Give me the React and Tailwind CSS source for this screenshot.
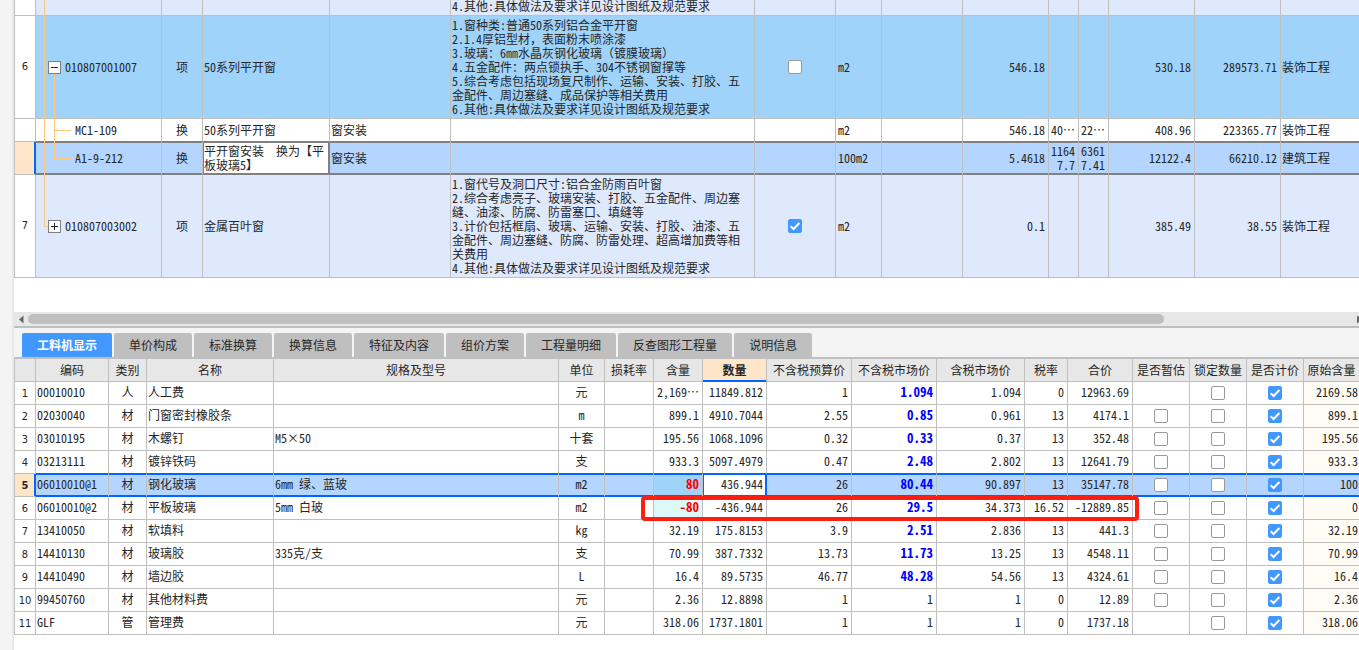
import React from "react";

const LINE = "border-[#bfbfbf]";

function Check({ label, checked = false }) {
  return (
    <label className="mx-auto grid h-[14px] w-[14px] place-items-center">
      <input
        type="checkbox"
        aria-label={label}
        defaultChecked={checked}
        className="peer col-start-1 row-start-1 m-0 h-[14px] w-[14px] appearance-none rounded-[2px] border border-[#999999] bg-white checked:border-[#4199ff] checked:bg-[#4199ff]"
      />
      <svg
        viewBox="0 0 14 14"
        className="pointer-events-none invisible col-start-1 row-start-1 h-[14px] w-[14px] peer-checked:visible"
        fill="none"
        stroke="#fff"
        strokeWidth="2"
        aria-hidden="true"
      >
        <path d="M2.6 7.2 5.6 10 11.4 4" />
      </svg>
    </label>
  );
}

function Expander({ open }) {
  return (
    <button type="button" aria-label={open ? "折叠" : "展开"} className="block h-[13px] w-[13px]">
      <svg viewBox="0 0 13 13" className="block h-[13px] w-[13px]" shapeRendering="crispEdges">
        <rect x="0.5" y="0.5" width="12" height="12" fill="#fff" stroke="#808080" />
        <path d={open ? "M3 6.5H10" : "M3 6.5H10M6.5 3V10"} stroke="#262626" />
      </svg>
    </button>
  );
}

/* ---------- bill of quantities ---------- */

const bill = [
  {
    kind: "clipped",
    rowClass: "h-[16px] bg-[#dee9fe]",
    features: ["4.其他:具体做法及要求详见设计图纸及规范要求"],
  },
  {
    kind: "parent",
    no: "6",
    rowClass: "h-[103px] bg-[#a0d3fa]",
    open: true,
    code: "010807001007",
    type: "项",
    name: "50系列平开窗",
    features: [
      "1.窗种类:普通50系列铝合金平开窗",
      "2.1.4厚铝型材，表面粉末喷涂漆",
      "3.玻璃：6㎜水晶灰钢化玻璃（镀膜玻璃）",
      "4.五金配件：两点锁执手、304不锈钢窗撑等",
      "5.综合考虑包括现场复尺制作、运输、安装、打胶、五金配件、周边塞缝、成品保护等相关费用",
      "6.其他:具体做法及要求详见设计图纸及规范要求",
    ],
    check: false,
    unit: "m2",
    qty: "546.18",
    price: "530.18",
    total: "289573.71",
    major: "装饰工程",
  },
  {
    kind: "child",
    rowClass: "h-[23px] bg-white",
    code: "MC1-109",
    type: "换",
    name: "50系列平开窗",
    spec: "窗安装",
    unit: "m2",
    qty: "546.18",
    a: "40…",
    b: "22…",
    price: "408.96",
    total: "223365.77",
    major: "装饰工程",
  },
  {
    kind: "child",
    last: true,
    selected: true,
    rowClass: "h-[33px] bg-[#b3d5ff]",
    code: "A1-9-212",
    type: "换",
    name: "平开窗安装　换为【平板玻璃5】",
    spec: "窗安装",
    unit: "100m2",
    qty: "5.4618",
    a: "11647.7",
    b: "63617.41",
    price: "12122.4",
    total: "66210.12",
    major: "建筑工程",
  },
  {
    kind: "parent",
    no: "7",
    last: true,
    rowClass: "h-[103px] bg-[#dee9fe]",
    code: "010807003002",
    type: "项",
    name: "金属百叶窗",
    features: [
      "1.窗代号及洞口尺寸:铝合金防雨百叶窗",
      "2.综合考虑亮子、玻璃安装、打胶、五金配件、周边塞缝、油漆、防腐、防雷塞口、填缝等",
      "3.计价包括框扇、玻璃、运输、安装、打胶、油漆、五金配件、周边塞缝、防腐、防雷处理、超高增加费等相关费用",
      "4.其他:具体做法及要求详见设计图纸及规范要求",
    ],
    check: true,
    unit: "m2",
    qty: "0.1",
    price: "385.49",
    total: "38.55",
    major: "装饰工程",
  },
];

function Tree({ row }) {
  const line = "absolute bg-[#ffc67d]";
  const trunkEnds = row.kind === "parent" && row.last;
  return (
    <>
      <span className={`${line} left-2 top-0 w-px ${trunkEnds ? "bottom-1/2" : "-bottom-px"}`} />
      {row.kind === "parent" && <span className={`${line} left-2 top-1/2 h-px w-1`} />}
      {row.open && <span className={`${line} left-[18px] top-1/2 -bottom-px w-px`} />}
      {row.kind === "child" && (
        <>
          <span className={`${line} left-[18px] top-0 w-px ${row.last ? "bottom-1/2" : "-bottom-px"}`} />
          <span className={`${line} left-[18px] top-1/2 h-px w-[17px]`} />
        </>
      )}
    </>
  );
}

function BillRow({ row, beforeSelected }) {
  const sel = row.selected;
  const edge = sel
    ? "border-r border-b border-r-[#bfbfbf] border-b-[#808080] shadow-[inset_0_1px_0_#808080,inset_0_-1px_0_#808080]"
    : beforeSelected
      ? "border-r border-b border-r-[#bfbfbf] border-b-[#808080]"
      : `border-r border-b ${LINE}`;
  const nameEdge = sel
    ? "border-r border-b border-[#808080] bg-white shadow-[inset_0_0_0_1px_#808080]"
    : edge;
  const num = `${edge} pl-[2px] pr-[3px] text-right break-all`;
  return (
    <tr className={row.rowClass}>
      <th
        scope="row"
        className={`border-x border-b ${LINE} text-center font-['DejaVu_Sans_Condensed','DejaVu_Sans',sans-serif] text-[11px] font-normal ${
          sel ? "bg-[#ffe6c8] shadow-[inset_-1px_0_0_#0066ff] border-r-[#0066ff]" : "bg-white"
        }`}
      >
        {row.no}
      </th>
      <td className={`relative ${edge}`}>
        <Tree row={row} />
        {row.kind === "parent" && (
          <div className="relative flex items-center gap-1 pl-3">
            <Expander open={row.open} />
            <span>{row.code}</span>
          </div>
        )}
        {row.kind === "child" && <div className="pl-[39px]">{row.code}</div>}
      </td>
      <td className={`${edge} text-center`}>{row.type}</td>
      <td className={`${nameEdge} pl-px`}>{row.name}</td>
      <td className={`${edge} pl-px`}>{row.spec}</td>
      <td className={`${edge} pl-px pr-3 ${row.kind === "clipped" ? "pb-[2px] align-bottom" : ""}`}>
        {row.features && row.features.map((f) => <p key={f}>{f}</p>)}
      </td>
      <td className={edge}>
        {row.check !== undefined && <Check label={`${row.name} 选择`} checked={row.check} />}
      </td>
      <td className={`${edge} pl-[2px]`}>{row.unit}</td>
      <td className={edge} />
      <td className={num}>{row.qty}</td>
      <td className={num}>{row.a}</td>
      <td className={num}>{row.b}</td>
      <td className={num}>{row.price}</td>
      <td className={num}>{row.total}</td>
      <td className={`${edge} border-r-0 pl-px`}>{row.major}</td>
    </tr>
  );
}

function BillTable() {
  return (
    <table className="w-full table-fixed border-separate border-spacing-0">
      <colgroup>
        <col className="w-[22px]" />
        <col className="w-[126px]" />
        <col className="w-[41px]" />
        <col className="w-[127px]" />
        <col className="w-[121px]" />
        <col className="w-[304px]" />
        <col className="w-[81px]" />
        <col className="w-[46px]" />
        <col className="w-[81px]" />
        <col className="w-[86px]" />
        <col className="w-[30px]" />
        <col className="w-[30px]" />
        <col className="w-[86px]" />
        <col className="w-[86px]" />
        <col />
      </colgroup>
      <tbody>
        {bill.map((row, i) => (
          <BillRow key={i} row={row} beforeSelected={Boolean(bill[i + 1] && bill[i + 1].selected)} />
        ))}
      </tbody>
    </table>
  );
}

/* ---------- tabs ---------- */

const tabs = ["工料机显示", "单价构成", "标准换算", "换算信息", "特征及内容", "组价方案", "工程量明细", "反查图形工程量", "说明信息"];

function Tabs() {
  return (
    <div
      role="tablist"
      className="flex gap-[2px] bg-[#f4f4f4] pl-2 pt-[5px] font-['Noto_Sans_CJK_SC',sans-serif]"
    >
      {tabs.map((t, i) => (
        <button
          key={t}
          type="button"
          role="tab"
          aria-selected={i === 0}
          className={`h-6 shrink-0 rounded-t-[2px] px-[15px] ${
            i === 0 ? "bg-[#4199ff] font-bold text-white" : "bg-[#bfbfbf]"
          }`}
        >
          {t}
        </button>
      ))}
    </div>
  );
}

/* ---------- resources ---------- */

const heads = ["编码", "类别", "名称", "规格及型号", "单位", "损耗率", "含量", "数量", "不含税预算价", "不含税市场价", "含税市场价", "税率", "合价", "是否暂估", "锁定数量", "是否计价", "原始含量"];

const resources = [
  ["00010010", "人", "人工费", "", "元", "2,169…", "11849.812", "1", "1.094", "1.094", "0", "12963.69", false, "2169.58"],
  ["02030040", "材", "门窗密封橡胶条", "", "m", "899.1", "4910.7044", "2.55", "0.85", "0.961", "13", "4174.1", true, "899.1"],
  ["03010195", "材", "木螺钉", "M5×50", "十套", "195.56", "1068.1096", "0.32", "0.33", "0.37", "13", "352.48", true, "195.56"],
  ["03213111", "材", "镀锌铁码", "", "支", "933.3", "5097.4979", "0.47", "2.48", "2.802", "13", "12641.79", true, "933.3"],
  ["06010010@1", "材", "钢化玻璃", "6mm 绿、蓝玻", "m2", "80", "436.944", "26", "80.44", "90.897", "13", "35147.78", true, "100"],
  ["06010010@2", "材", "平板玻璃", "5mm 白玻", "m2", "-80", "-436.944", "26", "29.5", "34.373", "16.52", "-12889.85", true, "0"],
  ["13410050", "材", "软填料", "", "kg", "32.19", "175.8153", "3.9", "2.51", "2.836", "13", "441.3", true, "32.19"],
  ["14410130", "材", "玻璃胶", "335克/支", "支", "70.99", "387.7332", "13.73", "11.73", "13.25", "13", "4548.11", true, "70.99"],
  ["14410490", "材", "墙边胶", "", "L", "16.4", "89.5735", "46.77", "48.28", "54.56", "13", "4324.61", true, "16.4"],
  ["99450760", "材", "其他材料费", "", "元", "2.36", "12.8898", "1", "1", "1", "0", "12.89", true, "2.36"],
  ["GLF", "管", "管理费", "", "元", "318.06", "1737.1801", "1", "1", "1", "0", "1737.18", false, "318.06"],
];

const SELECTED = 4;

function ResourceRow({ data, index }) {
  const [code, type, name, spec, unit, content, qty, budget, market, taxed, rate, total, estimate, original] = data;
  const sel = index === SELECTED;
  const edge = sel
    ? "border-r border-b border-r-[#bfbfbf] border-b-[#0066ff] shadow-[inset_0_1px_0_#0066ff,inset_0_-1px_0_#0066ff]"
    : index === SELECTED - 1
      ? "border-r border-b border-r-[#bfbfbf] border-b-[#0066ff]"
      : `border-r border-b ${LINE}`;
  const text = `${edge} pb-[2px]`;
  const qtyEdge = sel
    ? "border-r border-b border-[#0066ff] bg-white pb-[2px] shadow-[inset_0_0_0_1px_#0066ff]"
    : text;
  const num = "px-[3px] text-right";
  const changed = index === 4 || index === 5;
  const contentBg = index === 4 ? "bg-[#a0d3fa]" : index === 5 ? "bg-[#dcf8f8]" : "";
  return (
    <tr className={`h-[23px] whitespace-nowrap ${sel ? "bg-[#b3d5ff]" : ""}`}>
      <th
        scope="row"
        className={`border-x border-b ${LINE} pt-[2px] text-center font-['DejaVu_Sans_Condensed','DejaVu_Sans',sans-serif] text-[11px] ${
          sel ? "bg-[#ffe6c8] font-bold shadow-[inset_-1px_0_0_#0066ff] border-r-[#0066ff]" : "font-normal"
        }`}
      >
        {index + 1}
      </th>
      <td className={`${text} pl-px`}>{code}</td>
      <td className={`${text} text-center`}>{type}</td>
      <td className={`${text} pl-px`}>{name}</td>
      <td className={`${text} pl-px`}>{spec}</td>
      <td className={`${text} text-center`}>{unit}</td>
      <td className={edge} />
      <td className={`${text} ${num} ${contentBg} ${changed ? "text-[13px] font-bold text-[#ff0000]" : ""}`}>{content}</td>
      <td className={`${qtyEdge} ${num}`}>{qty}</td>
      <td className={`${text} ${num}`}>{budget}</td>
      <td className={`${text} ${num} ${index < 9 ? "text-[13px] font-bold text-[#0000ff]" : ""}`}>{market}</td>
      <td className={`${text} ${num}`}>{taxed}</td>
      <td className={`${text} ${num}`}>{rate}</td>
      <td className={`${text} ${num}`}>{total}</td>
      <td className={edge}>{estimate && <Check label={`${name} 是否暂估`} />}</td>
      <td className={edge}>
        <Check label={`${name} 锁定数量`} />
      </td>
      <td className={edge}>
        <Check label={`${name} 是否计价`} checked />
      </td>
      <td className={`${text} border-r-0 pr-px text-right ${sel ? "" : "bg-[#fffbf5]"}`}>{original}</td>
    </tr>
  );
}

function ResourceTable() {
  return (
    <div className="relative border-t-2 border-[#bfbfbf]">
      <table className="w-full table-fixed border-separate border-spacing-0">
        <colgroup>
          <col className="w-[22px]" />
          <col className="w-[73px]" />
          <col className="w-[38px]" />
          <col className="w-[127px]" />
          <col className="w-[285px]" />
          <col className="w-[46px]" />
          <col className="w-[49px]" />
          <col className="w-[49px]" />
          <col className="w-[64px]" />
          <col className="w-[85px]" />
          <col className="w-[85px]" />
          <col className="w-[88px]" />
          <col className="w-[43px]" />
          <col className="w-[65px]" />
          <col className="w-[57px]" />
          <col className="w-[57px]" />
          <col className="w-[57px]" />
          <col />
        </colgroup>
        <thead>
          <tr className="h-[23px] whitespace-nowrap bg-[#e7e7e7]">
            <td className={`border-x border-b ${LINE}`} />
            {heads.map((h) => (
              <th
                key={h}
                scope="col"
                className={`text-center ${
                  h === "数量"
                    ? "border-r border-b border-r-[#bfbfbf] border-b-[#0066ff] bg-[#ffe6c8] font-bold shadow-[inset_0_-1px_0_#0066ff]"
                    : `border-r border-b font-normal last:border-r-0 ${LINE}`
                }`}
              >
                {h}
              </th>
            ))}
          </tr>
        </thead>
        <tbody>
          {resources.map((r, i) => (
            <ResourceRow key={r[0]} data={r} index={i} />
          ))}
        </tbody>
      </table>
      <div className="pointer-events-none absolute left-[627px] top-[137px] h-[25px] w-[498px] rounded-[4px] border-4 border-[#ff1e10]" />
    </div>
  );
}

export default function App() {
  return (
    <div className="flex min-h-screen bg-white font-['Noto_Sans_Mono_CJK_SC','Noto_Sans_CJK_SC',sans-serif] text-[12px] leading-[14px] text-[#262626]">
      <aside className="w-[14px] shrink-0 border-r-2 border-[#e9e9e9] bg-[#f4f4f4]" />
      <main className="min-w-0 flex-1 overflow-hidden">
        <section className="flex h-[278px] flex-col justify-end overflow-hidden">
          <BillTable />
        </section>
        <div className="mt-[34px] flex h-[14px] items-center gap-1 bg-[#e7e7e7] pl-1">
          <svg viewBox="0 0 6 9" className="h-[9px] w-[6px] shrink-0" aria-hidden="true">
            <path d="M5.5 0.5v8L1 4.5z" fill="#666" />
          </svg>
          <div className="flex-1 pr-1">
            <div className="h-[10px] w-[86%] rounded-full bg-[#bfbfbf]" />
          </div>
          <svg viewBox="0 0 2 9" className="h-[9px] w-[2px] shrink-0" aria-hidden="true">
            <path d="M0 0.5v8L5 4.5z" fill="#666" />
          </svg>
        </div>
        <div className="h-[2px] bg-[#bfbfbf]" />
        <Tabs />
        <ResourceTable />
      </main>
    </div>
  );
}
